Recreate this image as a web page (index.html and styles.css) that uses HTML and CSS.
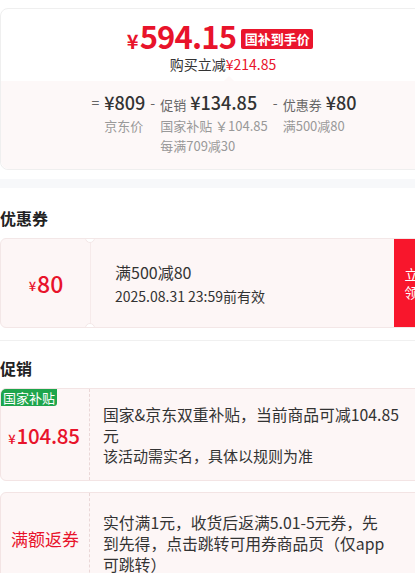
FILE: index.html
```html
<!DOCTYPE html>
<html lang="zh-CN">
<head>
<meta charset="utf-8">
<title>价格明细</title>
<link rel="stylesheet" href="styles.css">
</head>
<body>
<div class="page">
  <section class="price-card">
    <div class="price-row">
      <span class="price"><span class="yen">¥</span>594.15</span>
      <span class="price-tag">国补到手价</span>
    </div>
    <div class="save-row">购买立减<span class="red">¥214.85</span></div>
    <div class="breakdown">
      <div class="bd-group">
        <span class="op">=</span>
        <div class="bd-col">
          <div class="bd-main"><span class="bd-val">¥809</span></div>
          <div class="bd-sub">京东价</div>
        </div>
      </div>
      <div class="bd-group">
        <span class="op">-</span>
        <div class="bd-col">
          <div class="bd-main"><span class="bd-label">促销</span><span class="bd-val">¥134.85</span></div>
          <div class="bd-sub">国家补贴 ￥104.85</div>
          <div class="bd-sub">每满709减30</div>
        </div>
      </div>
      <div class="bd-group">
        <span class="op">-</span>
        <div class="bd-col">
          <div class="bd-main"><span class="bd-label">优惠券</span><span class="bd-val">¥80</span></div>
          <div class="bd-sub">满500减80</div>
        </div>
      </div>
    </div>
  </section>

  <div class="band"></div>

  <h2 class="sec-title">优惠券</h2>
  <div class="coupon">
    <div class="coupon-left"><span class="cy">¥</span>80</div>
    <div class="coupon-div"></div>
    <div class="coupon-body">
      <div class="coupon-name">满500减80</div>
      <div class="coupon-date">2025.08.31 23:59前有效</div>
    </div>
    <div class="coupon-btn">立即<br>领取</div>
  </div>

  <div class="rule"></div>

  <h2 class="sec-title promo-title">促销</h2>
  <div class="promo">
    <div class="promo-left">
      <span class="promo-badge">国家补贴</span>
      <div class="promo-amt"><span class="cy">¥</span>104.85</div>
    </div>
    <div class="promo-body">
      <div class="promo-main">国家&amp;京东双重补贴，当前商品可减104.85<br>元</div>
      <div class="promo-note">该活动需实名，具体以规则为准</div>
    </div>
  </div>
  <div class="promo promo-2">
    <div class="promo-left">
      <div class="promo-kind">满额返券</div>
    </div>
    <div class="promo-body">
      <div class="promo-main">实付满1元，收货后返满5.01-5元券，先<br>到先得，点击跳转可用券商品页（仅app<br>可跳转）</div>
    </div>
  </div>
</div>
</body>
</html>
```

FILE: styles.css
```css
html, body {
  margin: 0;
  padding: 0;
  overflow: hidden;
  background: #fff;
}
body {
  font-family: "Noto Sans CJK SC", "Noto Sans", sans-serif;
  color: #333;
}
.page {
  width: 444px;
  padding-top: 8px;
}
.red { color: #e8132b; }

.price-card {
  border: 1px solid #efefef;
  border-radius: 8px;
  background: #fff;
}
.price-row {
  display: flex;
  justify-content: center;
  align-items: center;
  gap: 5px;
  padding-top: 12px;
  height: 34px;
  padding-right: 4px;
}
.price {
  color: #e8132b;
  font-size: 31px;
  font-weight: 700;
  line-height: 34px;
  letter-spacing: -0.8px;
}
.price .yen {
  font-size: 20px;
  margin-right: 2px;
}
.price-tag {
  background: #ea152c;
  color: #fff;
  font-size: 13px;
  font-weight: 700;
  line-height: 20px;
  padding: 0 3.5px;
  border-radius: 2px;
  margin-top: 2px;
}
.save-row {
  text-align: center;
  font-size: 14px;
  line-height: 20px;
  margin-top: -1px;
  padding-left: 2px;
}
.breakdown {
  position: relative;
  margin-top: 7px;
  background: #fdf8f8;
  border-radius: 0 0 8px 8px;
  display: flex;
  justify-content: center;
  gap: 5px;
  padding: 9px 0 13px 4px;
}
.breakdown::before {
  content: "";
  position: absolute;
  top: -5px;
  left: 223px;
  border: 5px solid transparent;
  border-top: 0;
  border-bottom-color: #fdf8f8;
}
.bd-group {
  display: flex;
  align-items: flex-start;
  gap: 5px;
}
.op {
  font-size: 14px;
  color: #666;
  line-height: 24px;
}
.bd-col { display: flex; flex-direction: column; }
.bd-main {
  height: 24px;
  display: flex;
  align-items: baseline;
  gap: 4px;
  white-space: nowrap;
}
.bd-label {
  font-size: 13px;
  color: #666;
  line-height: 24px;
}
.bd-val {
  font-size: 18px;
  font-weight: 500;
  color: #333;
  line-height: 24px;
}
.bd-sub {
  font-size: 13px;
  color: #999;
  line-height: 20px;
  white-space: nowrap;
}
.bd-main + .bd-sub { margin-top: 2px; }

.band {
  height: 9px;
  background: #f7f8fa;
  margin-top: 9px;
}

.sec-title {
  font-size: 16px;
  font-weight: 700;
  color: #222;
  line-height: 20px;
  margin: 20px 0 10px;
}

.coupon {
  display: flex;
  height: 88px;
  border: 1px solid #f3e7e7;
  border-radius: 6px;
  background: #fdf6f6;
  overflow: hidden;
}
.coupon-left {
  width: 88px;
  display: flex;
  align-items: center;
  justify-content: center;
  color: #e8132b;
  font-size: 23px;
  font-weight: 500;
  padding-left: 1px;
}
.cy {
  font-size: 13px;
  margin-right: 1px;
  margin-top: 4px;
}
.coupon-div {
  position: relative;
  width: 1px;
  background: #f6eaea;
}
.coupon-div::before,
.coupon-div::after {
  content: "";
  position: absolute;
  left: -5px;
  width: 10px;
  height: 10px;
  border-radius: 50%;
  background: #fff;
  border: 1px solid #f3e7e7;
  box-sizing: border-box;
}
.coupon-div::before { top: -6px; }
.coupon-div::after { bottom: -6px; }
.coupon-body {
  flex: 1;
  padding-left: 24px;
  display: flex;
  flex-direction: column;
  justify-content: center;
  gap: 3px;
}
.coupon-name { font-size: 16px; line-height: 22px; }
.coupon-date { font-size: 14px; line-height: 20px; }
.coupon-btn {
  width: 49px;
  background: #f8162c;
  color: #fff;
  font-size: 14px;
  line-height: 18px;
  display: flex;
  align-items: center;
  justify-content: center;
  text-align: center;
}

.rule {
  height: 1px;
  background: #f0f0f0;
  margin-top: 12px;
}
.promo-title { margin-top: 17px; margin-bottom: 10px; }

.promo {
  display: flex;
  border: 1px solid #f3e4e4;
  border-radius: 6px;
  background: #fdf6f6;
  overflow: hidden;
  min-height: 91px;
}
.promo-left {
  width: 88px;
  border-right: 1px dashed #ead7d7;
  display: flex;
  flex-direction: column;
  align-items: center;
  justify-content: center;
  position: relative;
}
.promo-badge {
  position: absolute;
  top: 0;
  left: 0;
  background: #1ea54c;
  color: #fff;
  font-size: 13px;
  line-height: 17px;
  padding: 0 2px;
  border-radius: 0 0 3px 0;
}
.promo-amt {
  color: #e8132b;
  font-size: 20.5px;
  font-weight: 500;
  margin-top: 0;
  margin-right: 2px;
  letter-spacing: -0.2px;
}
.promo-body {
  flex: 1;
  padding: 0 0 0 13px;
  display: flex;
  flex-direction: column;
  justify-content: center;
}
.promo-main {
  font-size: 15.8px;
  line-height: 21px;
  color: #333;
}
.promo-note {
  font-size: 15px;
  line-height: 20px;
  color: #333;
}
.promo-2 {
  margin-top: 11px;
  min-height: 100px;
}
.promo-kind {
  color: #e8132b;
  font-size: 17px;
  margin-bottom: 10px;
}
```
